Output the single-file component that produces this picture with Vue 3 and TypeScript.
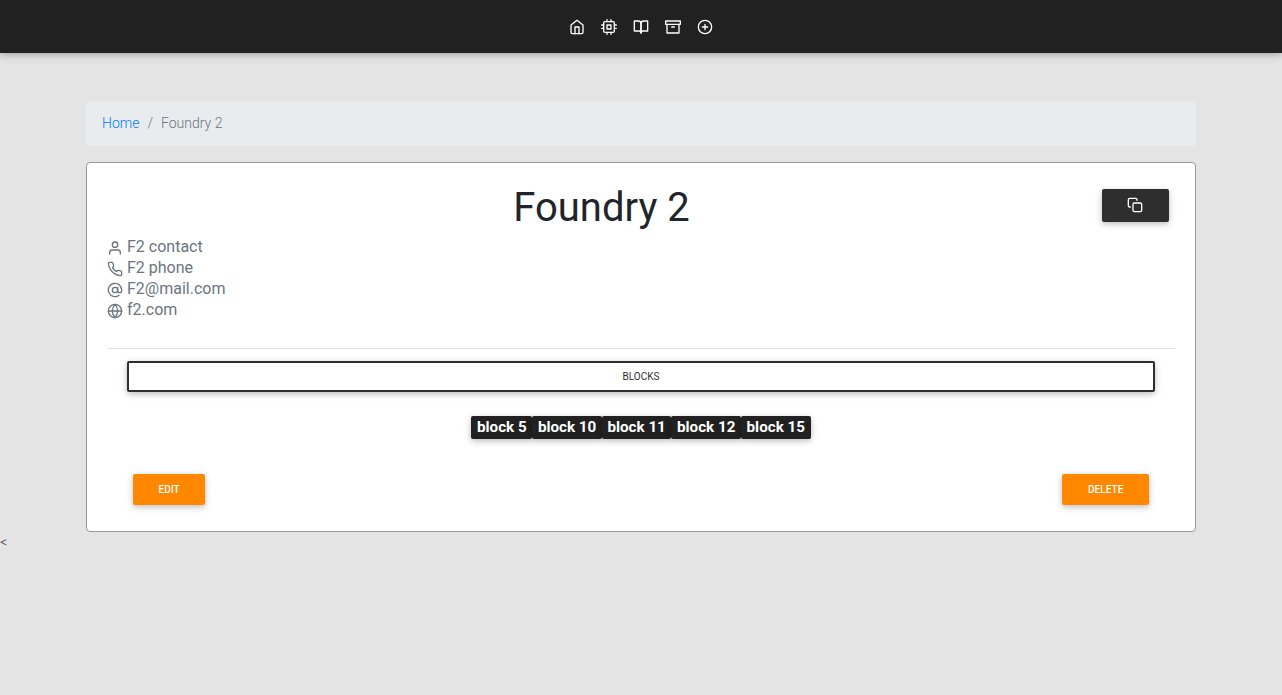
<script setup lang="ts">
type Shapes = string[]

const icons: Record<string, Shapes> = {
  home: ['M3 9l9-7 9 7v11a2 2 0 0 1-2 2H5a2 2 0 0 1-2-2z', 'M9 22V12h6v10'],
  cpu: [
    'M6 4h12a2 2 0 0 1 2 2v12a2 2 0 0 1-2 2H6a2 2 0 0 1-2-2V6a2 2 0 0 1 2-2z',
    'M9 9h6v6H9z',
    'M9 1v3M15 1v3M9 20v3M15 20v3M20 9h3M20 14h3M1 9h3M1 14h3',
  ],
  book: [
    'M2 3h6a4 4 0 0 1 4 4v14a3 3 0 0 0-3-3H2z',
    'M22 3h-6a4 4 0 0 0-4 4v14a3 3 0 0 1 3-3h7z',
  ],
  archive: ['M21 8v13H3V8', 'M1 3h22v5H1z', 'M10 12h4'],
  plus: ['M2 12a10 10 0 1 0 20 0a10 10 0 1 0-20 0', 'M12 8v8M8 12h8'],
  copy: [
    'M11 9h9a2 2 0 0 1 2 2v9a2 2 0 0 1-2 2h-9a2 2 0 0 1-2-2v-9a2 2 0 0 1 2-2z',
    'M5 15H4a2 2 0 0 1-2-2V4a2 2 0 0 1 2-2h9a2 2 0 0 1 2 2v1',
  ],
  user: ['M20 21v-2a4 4 0 0 0-4-4H8a4 4 0 0 0-4 4v2', 'M8 7a4 4 0 1 0 8 0a4 4 0 1 0-8 0'],
  phone: [
    'M22 16.92v3a2 2 0 0 1-2.18 2 19.79 19.79 0 0 1-8.63-3.07 19.5 19.5 0 0 1-6-6 19.79 19.79 0 0 1-3.07-8.67A2 2 0 0 1 4.11 2h3a2 2 0 0 1 2 1.72 12.84 12.84 0 0 0 .7 2.81 2 2 0 0 1-.45 2.11L8.09 9.91a16 16 0 0 0 6 6l1.27-1.27a2 2 0 0 1 2.11-.45 12.84 12.84 0 0 0 2.81.7A2 2 0 0 1 22 16.92z',
  ],
  at: ['M8 12a4 4 0 1 0 8 0a4 4 0 1 0-8 0', 'M16 8v5a3 3 0 0 0 6 0v-1a10 10 0 1 0-3.92 7.94'],
  globe: [
    'M2 12a10 10 0 1 0 20 0a10 10 0 1 0-20 0',
    'M2 12h20',
    'M12 2a15.3 15.3 0 0 1 4 10 15.3 15.3 0 0 1-4 10 15.3 15.3 0 0 1-4-10 15.3 15.3 0 0 1 4-10z',
  ],
}

const navItems: string[] = ['home', 'cpu', 'book', 'archive', 'plus']
const contacts: { icon: string; text: string }[] = [
  { icon: 'user', text: 'F2 contact' },
  { icon: 'phone', text: 'F2 phone' },
  { icon: 'at', text: 'F2@mail.com' },
  { icon: 'globe', text: 'f2.com' },
]
const blocks: string[] = ['block 5', 'block 10', 'block 11', 'block 12', 'block 15']
</script>

<template>
  <div class="page">
    <nav class="navbar">
      <a v-for="name in navItems" :key="name" class="nav-link">
        <svg class="icon" viewBox="0 0 24 24"><path v-for="d in icons[name]" :key="d" :d="d" /></svg>
      </a>
    </nav>
    <main class="container">
      <div class="breadcrumb">
        <a class="crumb-link">Home</a><span class="separator">/</span><span>Foundry 2</span>
      </div>
      <section class="card">
        <header class="card-header">
          <h1>Foundry 2</h1>
          <button class="btn copy">
            <svg class="icon" viewBox="0 0 24 24"><path v-for="d in icons.copy" :key="d" :d="d" /></svg>
          </button>
        </header>
        <ul class="contacts">
          <li v-for="c in contacts" :key="c.icon">
            <svg class="icon" viewBox="0 0 24 24"><path v-for="d in icons[c.icon]" :key="d" :d="d" /></svg>
            <span>{{ c.text }}</span>
          </li>
        </ul>
        <hr />
        <button class="btn outline">Blocks</button>
        <div class="badges">
          <span v-for="b in blocks" :key="b" class="badge">{{ b }}</span>
        </div>
        <footer class="actions">
          <button class="btn orange">Edit</button>
          <button class="btn orange">Delete</button>
        </footer>
      </section>
    </main>
    <div class="stray">&lt;</div>
  </div>
</template>

<style>
body {
  margin: 0;
  background: #e4e4e4;
}
</style>

<style scoped>
.page {
  min-height: 695px;
  background: #e4e4e4;
  font-family: Roboto, sans-serif;
  font-weight: 300;
  color: #212529;
}
.page *,
.page {
  box-sizing: border-box;
}
.icon {
  display: block;
  flex: none;
  width: 16px;
  height: 16px;
  fill: none;
  stroke: currentColor;
  stroke-width: 2;
  stroke-linecap: round;
  stroke-linejoin: round;
}
.navbar {
  display: flex;
  justify-content: center;
  align-items: center;
  gap: 16px;
  height: 53px;
  padding-top: 1px;
  background: #212121;
  color: #fff;
  box-shadow: 0 2px 5px rgba(0, 0, 0, 0.16), 0 2px 10px rgba(0, 0, 0, 0.12);
}
.container {
  width: 1110px;
  margin: 0 auto;
  padding-top: 48px;
}
.breadcrumb {
  display: flex;
  height: 45px;
  padding: 12px 16px;
  margin-bottom: 16px;
  border-radius: 4px;
  background: #e9ecef;
  color: #6c757d;
  font-size: 14px;
  line-height: 21px;
}
.crumb-link {
  color: #007bff;
}
.separator {
  padding: 0 8px;
}
.card {
  height: 370px;
  padding: 20px;
  border: 1px solid #999;
  border-radius: 4px;
  background: #fff;
}
.card-header {
  display: flex;
  height: 53px;
}
h1 {
  flex: 1;
  margin: 0;
  padding-top: 1px;
  text-align: center;
  font-size: 40px;
  line-height: 48px;
  font-weight: 400;
}
.btn {
  display: flex;
  align-items: center;
  justify-content: center;
  margin: 6px;
  padding: 0;
  border: 0;
  border-radius: 2px;
  font-family: inherit;
  font-size: 10px;
  line-height: 15px;
  font-weight: 400;
  text-transform: uppercase;
  box-shadow: 0 2px 5px rgba(0, 0, 0, 0.16), 0 2px 10px rgba(0, 0, 0, 0.12);
}
.copy {
  width: 67px;
  height: 33px;
  padding: 0 1px 1px 0;
  background: #2e2e2e;
  color: #fff;
}
.contacts {
  margin: 0;
  padding: 0;
  list-style: none;
  color: #6c757d;
  font-size: 16px;
  font-weight: 400;
}
.contacts li {
  display: flex;
  height: 21px;
  line-height: 21px;
  gap: 4px;
}
.contacts .icon {
  margin-top: 4px;
}
hr {
  height: 1px;
  margin: 28px 0 12px;
  border: 0;
  background: #e0e0e0;
}
.outline {
  width: 1028px;
  height: 31px;
  margin: 0 auto;
  border: 2px solid #2e2e2e;
  background: #fff;
  color: #2e2e2e;
}
.badges {
  display: flex;
  justify-content: center;
  margin-top: 24px;
}
.badge {
  height: 23px;
  padding: 3px 5.6px 4px;
  border-radius: 2px;
  background: #212121;
  color: #fff;
  font-size: 15.2px;
  line-height: 16px;
  font-weight: 700;
  box-shadow: 0 2px 5px rgba(0, 0, 0, 0.16), 0 2px 10px rgba(0, 0, 0, 0.12);
}
.actions {
  display: flex;
  justify-content: space-between;
  padding: 0 20px;
  margin-top: 29px;
}
.orange {
  height: 31px;
  padding: 0 25.6px;
  background: #ff8800;
  color: #fff;
  font-size: 10.1px;
  font-weight: 500;
}
.stray {
  font-size: 14px;
  line-height: 21px;
}
</style>
